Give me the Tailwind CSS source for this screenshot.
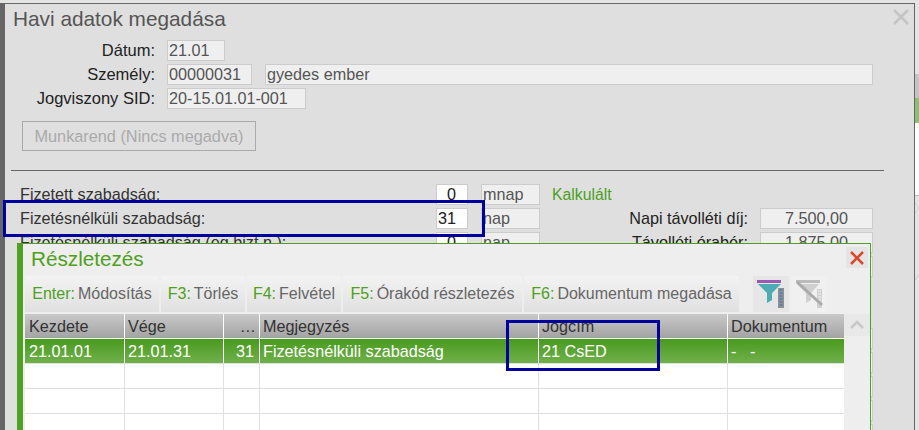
<!DOCTYPE html>
<html lang="en">
<head>
    <meta charset="UTF-8">
    <title>Havi adatok megadása</title>
    <script src="https://cdn.jsdelivr.net/npm/@tailwindcss/browser@4"></script>
</head>
<body class="bg-[#e4e4e4] font-['Liberation_Sans',Arial,sans-serif] text-[16.2px] text-[#333]">
    <div class="relative w-[919px] h-[430px] overflow-hidden">
        <!-- page behind the dialog -->
        <div class="absolute left-[915px] top-[74px] w-[4px] h-[24px] bg-[#c4c4c4]"></div>
        <div class="absolute left-[915px] top-[98px] w-[4px] h-[25px] bg-[#8dbf72]"></div>
        <div class="absolute left-[915px] top-[123px] w-[4px] h-[72px] bg-white"></div>
        <div class="absolute left-[915px] top-[195px] w-[4px] h-[1px] bg-[#bbb]"></div>
        <svg class="absolute left-[915px] top-[203px]" width="4" height="10" viewBox="0 0 4 10"><path d="M0 0L4 5L0 10" fill="none" stroke="#d0d0d0"/></svg>
        <svg class="absolute left-[915px] top-[273px]" width="4" height="8" viewBox="0 0 4 8"><path d="M0 7L4 1" fill="none" stroke="#d0d0d0"/></svg>

        <!-- dialog -->
        <div class="absolute left-0 top-[3px] w-[915px] h-[427px] bg-[#dfdfdf] border-t border-t-[#666] border-r border-r-[#666] border-l-[5px] border-l-[#666]">
            <div class="flex justify-between pl-[8px] pr-[5px] h-[36px]">
                <h1 class="text-[20.8px] leading-[30px] text-[#555]">Havi adatok megadása</h1>
                <svg class="mt-[5px]" width="16" height="16" viewBox="0 0 16 16"><path d="M1 1L15 15M15 1L1 15" stroke="#c4c4c4" stroke-width="2.5"/></svg>
            </div>

            <div class="grid grid-cols-[155px_1fr] gap-y-[3px] items-center w-[868px]">
                <label class="text-right text-[16.5px] leading-[21px] text-[#222] pr-[5px]">Dátum:</label>
                <div class="ml-[7px] w-[58px] h-[21px] px-[1px] leading-[19px] bg-[#efefef] border border-[#ccc] text-[#555]">21.01</div>
                <label class="text-right text-[16.5px] leading-[21px] text-[#222] pr-[5px]">Személy:</label>
                <div class="ml-[7px] flex gap-[13px]">
                    <div class="w-[85px] h-[21px] px-[1px] leading-[19px] bg-[#efefef] border border-[#ccc] text-[#555]">00000031</div>
                    <div class="flex-1 h-[21px] px-[1px] leading-[19px] bg-[#efefef] border border-[#ccc] text-[#555]">gyedes ember</div>
                </div>
                <label class="text-right text-[16.5px] leading-[21px] text-[#222] pr-[5px]">Jogviszony SID:</label>
                <div class="ml-[7px] w-[139px] h-[21px] px-[1px] leading-[19px] bg-[#efefef] border border-[#ccc] text-[#555]">20-15.01.01-001</div>
            </div>

            <button class="block ml-[17px] mt-[12px] w-[234px] h-[30px] border border-[#aaa] text-[16.3px] text-[#aaa] text-center">Munkarend (Nincs megadva)</button>
            <div class="ml-[6px] mt-[19px] w-[873px] border-t border-[#666]"></div>

            <div class="mt-[13px] ml-[15px] flex flex-col gap-[3px] w-[853px]">
                <div class="flex items-center h-[21px]">
                    <span class="w-[416px] text-[#333]">Fizetett szabadság:</span>
                    <div class="w-[32px] h-[21px] pr-[11px] text-right leading-[19px] bg-white border border-[#ccc] text-[#222]">0</div>
                    <div class="ml-[13px] w-[59px] h-[21px] px-[1px] leading-[19px] bg-[#efefef] border border-[#ccc] text-[#555]">mnap</div>
                    <span class="ml-[12px] text-[15.8px] text-[#4c9f22]">Kalkulált</span>
                </div>
                <div class="flex items-center h-[21px]">
                    <span class="w-[416px] text-[#333]">Fizetésnélküli szabadság:</span>
                    <div class="w-[32px] h-[21px] px-[1px] leading-[19px] bg-white border border-[#ccc] text-[#222]">31</div>
                    <div class="ml-[13px] w-[59px] h-[21px] px-[1px] leading-[19px] bg-[#efefef] border border-[#ccc] text-[#555]">nap</div>
                    <span class="w-[208px] text-right text-[#222]">Napi távolléti díj:</span>
                    <div class="ml-[12px] w-[113px] h-[21px] pr-[24px] text-right leading-[19px] bg-[#efefef] border border-[#ccc] text-[#555]">7.500,00</div>
                </div>
                <div class="flex items-center h-[21px]">
                    <span class="w-[416px] text-[#333]">Fizetésnélküli szabadság (eg.bizt.n.):</span>
                    <div class="w-[32px] h-[21px] pr-[11px] text-right leading-[19px] bg-white border border-[#ccc] text-[#222]">0</div>
                    <div class="ml-[13px] w-[59px] h-[21px] px-[1px] leading-[19px] bg-[#efefef] border border-[#ccc] text-[#555]">nap</div>
                    <span class="w-[208px] text-right text-[#222]">Távolléti órabér:</span>
                    <div class="ml-[12px] w-[113px] h-[21px] pr-[24px] text-right leading-[19px] bg-[#efefef] border border-[#ccc] text-[#555]">1.875,00</div>
                </div>
                <!-- fields whose right edge shows past the popup -->
                <div class="ml-auto w-[113px] h-[21px] bg-[#efefef] border border-[#ccc]"></div>
                <div class="h-[45px]"></div>
                <div class="ml-auto w-[113px] h-[21px] bg-[#efefef] border border-[#ccc]"></div>
                <div class="ml-auto w-[113px] h-[21px] bg-[#efefef] border border-[#ccc]"></div>
                <div class="ml-auto w-[113px] h-[21px] bg-[#efefef] border border-[#ccc]"></div>
                <div class="ml-auto w-[113px] h-[21px] bg-[#efefef] border border-[#ccc]"></div>
                <div class="ml-auto w-[113px] h-[21px] bg-[#efefef] border border-[#ccc]"></div>
            </div>
        </div>

        <!-- highlight around the first row -->
        <div class="absolute left-[3px] top-[200px] w-[482px] h-[37px] border-[3px] border-[#00009c] z-10"></div>

        <!-- Részletezés popup -->
        <div class="absolute left-[17px] top-[243px] w-[854px] h-[187px] overflow-hidden bg-[#eeeeee] border border-[#4ea020] border-l-[6px] border-b-0 z-20">
            <div class="flex justify-between h-[32px] pl-[8px] pr-[2px]">
                <h2 class="text-[20.7px] leading-[30px] text-[#4ea020]">Részletezés</h2>
                <div class="mt-[3px] w-[22px] h-[21px] bg-[#e4e4e4] flex items-center justify-center">
                    <svg width="14" height="14" viewBox="0 0 14 14"><path d="M1 1L13 13M13 1L1 13" stroke="#d9482b" stroke-width="2.5"/></svg>
                </div>
            </div>

            <div class="flex ml-[2px] gap-[2px] h-[36px] whitespace-nowrap text-[16px]">
                <div class="w-[134px] flex items-center justify-center bg-gradient-to-b from-[#f3f3f3] to-[#e0e0e0] text-[#666]"><span class="text-[#4ea020] mr-[3px]">Enter:</span>Módosítás</div>
                <div class="w-[84px] flex items-center justify-center bg-gradient-to-b from-[#f3f3f3] to-[#e0e0e0] text-[#666]"><span class="text-[#4ea020] mr-[3px]">F3:</span>Törlés</div>
                <div class="w-[94px] flex items-center justify-center bg-gradient-to-b from-[#f3f3f3] to-[#e0e0e0] text-[#666]"><span class="text-[#4ea020] mr-[3px]">F4:</span>Felvétel</div>
                <div class="w-[179px] flex items-center justify-center bg-gradient-to-b from-[#f3f3f3] to-[#e0e0e0] text-[#666]"><span class="text-[#4ea020] mr-[3px]">F5:</span>Órakód részletezés</div>
                <div class="w-[215px] flex items-center justify-center bg-gradient-to-b from-[#f3f3f3] to-[#e0e0e0] text-[#666]"><span class="text-[#4ea020] mr-[3px]">F6:</span>Dokumentum megadása</div>
                <div class="ml-[12px] w-[36px] bg-[#e6e6e6]">
                    <svg width="36" height="36" viewBox="0 0 36 36">
                        <rect x="4" y="4" width="24" height="3" fill="#9b59b6"/>
                        <path d="M5 8H28L19 17V24L14 27V17Z" fill="#4bacb4"/>
                        <rect x="25" y="12" width="6" height="20" fill="#8f8f8f"/>
                        <path d="M26.5 14H29.5M26.5 17H29.5M26.5 20H29.5M26.5 23H29.5M26.5 26H29.5M26.5 29H29.5" stroke="#4a7fc4" stroke-width="1.5"/>
                    </svg>
                </div>
                <div class="w-[36px] bg-[#f0f0f0]">
                    <svg width="36" height="36" viewBox="0 0 36 36">
                        <rect x="5" y="4" width="24" height="3" fill="#bbb"/>
                        <path d="M6 8H28L20 17V24L15 27V17Z" fill="#cfcfcf"/>
                        <rect x="26" y="13" width="5" height="19" fill="#d0d0d0"/>
                        <path d="M27 15H30M27 18H30M27 21H30M27 24H30M27 27H30" stroke="#e8e8e8" stroke-width="1.5"/>
                        <path d="M6 6L31 29" stroke="#aaa" stroke-width="3"/>
                    </svg>
                </div>
            </div>

            <div class="flex ml-[2px] mt-[2px]">
                <div class="w-[819px] h-[116px] bg-white">
                    <div class="grid grid-cols-[99px_98px_35px_278px_188px_116px] gap-x-[1px] h-[24px] leading-[24px] text-[#333]">
                        <div class="pl-[4px] bg-gradient-to-b from-[#c9c9c9] to-[#a3a3a3]">Kezdete</div>
                        <div class="pl-[3px] bg-gradient-to-b from-[#c9c9c9] to-[#a3a3a3]">Vége</div>
                        <div class="pr-[3px] text-right bg-gradient-to-b from-[#c9c9c9] to-[#a3a3a3]">…</div>
                        <div class="pl-[3px] bg-gradient-to-b from-[#c9c9c9] to-[#a3a3a3]">Megjegyzés</div>
                        <div class="pl-[3px] bg-gradient-to-b from-[#c9c9c9] to-[#a3a3a3]">Jogcím</div>
                        <div class="pl-[3px] bg-gradient-to-b from-[#c9c9c9] to-[#a3a3a3]">Dokumentum</div>
                    </div>
                    <div class="mt-[1px] grid grid-cols-[99px_98px_35px_278px_188px_116px] gap-x-[1px] h-[24px] leading-[24px] text-white">
                        <div class="pl-[4px] bg-gradient-to-b from-[#489a1c] to-[#70b04a]">21.01.01</div>
                        <div class="pl-[3px] bg-gradient-to-b from-[#489a1c] to-[#70b04a]">21.01.31</div>
                        <div class="pr-[5px] text-right bg-gradient-to-b from-[#489a1c] to-[#70b04a]">31</div>
                        <div class="pl-[3px] bg-gradient-to-b from-[#489a1c] to-[#70b04a]">Fizetésnélküli szabadság</div>
                        <div class="pl-[3px] bg-gradient-to-b from-[#489a1c] to-[#70b04a]">21 CsED</div>
                        <div class="pl-[3px] whitespace-pre bg-gradient-to-b from-[#489a1c] to-[#70b04a]">-   -</div>
                    </div>
                    <div class="grid grid-cols-[99px_98px_35px_278px_188px_116px] gap-x-[1px] gap-y-[1px] pt-[1px] auto-rows-[24px] bg-[#e0e0e0]">
                        <div class="bg-white"></div><div class="bg-white"></div><div class="bg-white"></div><div class="bg-white"></div><div class="bg-white"></div><div class="bg-white"></div>
                        <div class="bg-white"></div><div class="bg-white"></div><div class="bg-white"></div><div class="bg-white"></div><div class="bg-white"></div><div class="bg-white"></div>
                        <div class="bg-white"></div><div class="bg-white"></div><div class="bg-white"></div><div class="bg-white"></div><div class="bg-white"></div><div class="bg-white"></div>
                    </div>
                </div>
                <div class="w-[26px] h-[22px] bg-[#e8e8e8] flex items-center justify-center">
                    <svg width="16" height="10" viewBox="0 0 16 10"><path d="M2 8L8 2L14 8" fill="none" stroke="#c8c8c8" stroke-width="2.5"/></svg>
                </div>
            </div>
        </div>

        <!-- highlight around Jogcím -->
        <div class="absolute left-[506px] top-[320px] w-[154px] h-[51px] border-[3px] border-[#00009c] z-30"></div>
    </div>
</body>
</html>
